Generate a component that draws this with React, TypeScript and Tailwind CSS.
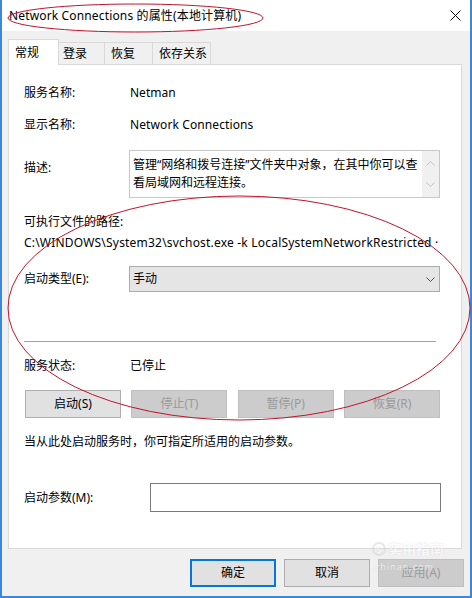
import type { ReactNode } from 'react';

const font = "font-['Noto_Sans','Noto_Sans_CJK_SC',sans-serif]";

function Tab({ label, active, width, pad }: { label: string; active?: boolean; width: number; pad: number }) {
  return (
    <div
      style={{ width, paddingLeft: pad }}
      className={
        active
          ? 'relative z-10 -mb-px flex h-[26px] items-center border border-b-0 border-[#d9d9d9] bg-white'
          : 'flex h-[22px] items-center border border-b-0 border-l-0 border-[#d9d9d9] bg-[#f0f0f0]'
      }
    >
      {label}
    </div>
  );
}

function Row({ label, children, className = '' }: { label: string; children?: ReactNode; className?: string }) {
  return (
    <div className={`flex h-[20px] items-center ${className}`}>
      <span className="w-[106px]">{label}</span>
      {children}
    </div>
  );
}

function Button({ label, disabled, primary, w = 'w-[96px]' }: { label: string; disabled?: boolean; primary?: boolean; w?: string }) {
  let cls = 'border-[#adadad] bg-[#e1e1e1] text-black';
  if (disabled) cls = 'border-[#bfbfbf] bg-[#cccccc] text-[#9a9a9a]';
  if (primary) cls = 'border-2 border-[#0078d7] bg-[#e1e1e1] text-black';
  return (
    <div className={`flex h-[28px] ${w} items-center justify-center border ${cls}`}>{label}</div>
  );
}

function Chevron({ up, color }: { up?: boolean; color: string }) {
  return (
    <svg width="9" height="5" viewBox="0 0 9 5" fill="none">
      <path d={up ? 'M0.5 4.5 L4.5 0.5 L8.5 4.5' : 'M0.5 0.5 L4.5 4.5 L8.5 0.5'} stroke={color} strokeWidth="1" />
    </svg>
  );
}

export default function App() {
  return (
    <div className={`relative flex h-[598px] w-[472px] flex-col border-x-2 border-b-2 border-[#3b87d8] bg-[#f0f0f0] text-[12px] leading-none text-black ${font}`}>
      {/* title bar */}
      <div className="flex h-[31px] items-center justify-between bg-white pl-[7px] pr-[9px]">
        <span className="tracking-[0.15px]">Network Connections 的属性(本地计算机)</span>
        <svg width="11" height="11" viewBox="0 0 11 11">
          <path d="M0.5 0.5 L10.5 10.5 M10.5 0.5 L0.5 10.5" stroke="#000" strokeWidth="1" />
        </svg>
      </div>

      {/* tabs */}
      <div className="ml-[6px] mt-[8px] flex h-[25px] items-end">
        <Tab label="常规" active width={51} pad={6} />
        <Tab label="登录" width={46} pad={4} />
        <Tab label="恢复" width={48} pad={6} />
        <Tab label="依存关系" width={58} pad={6} />
      </div>

      {/* tab page */}
      <div className="ml-[6px] flex h-[485px] w-[454px] flex-col border border-[#d9d9d9] bg-white pl-[15px] pt-[18px]">
        <Row label="服务名称:">Netman</Row>
        <Row label="显示名称:" className="mt-[12px]">
          <span className="tracking-[0.1px]">Network Connections</span>
        </Row>

        <div className="mt-[15px] flex">
          <span className="w-[105px] pt-[12px]">描述:</span>
          <div className="flex h-[48px] w-[311px] border border-[#c8c8c8]">
            <div className="flex-1 pl-[3px] pt-[5px] leading-[18px]">
              管理“网络和拨号连接”文件夹中对象，在其中你可以查看局域网和远程连接。
            </div>
            <div className="flex w-[17px] flex-col items-center justify-between bg-[#f0f0f0] py-[10px]">
              <Chevron up color="#c2c2c2" />
              <Chevron color="#c2c2c2" />
            </div>
          </div>
        </div>

        <div className="mt-[14px] flex h-[20px] items-center">可执行文件的路径:</div>
        <div className="mt-[1px] flex h-[20px] items-center whitespace-nowrap tracking-[0.2px]">
          C:\WINDOWS\System32\svchost.exe -k LocalSystemNetworkRestricted ·
        </div>

        <div className="mt-[13px] flex items-center">
          <span className="w-[105px]">启动类型(E):</span>
          <div className="flex h-[26px] w-[311px] items-center justify-between border border-[#acacac] bg-[#e5e5e5] pl-[3px] pr-[4px]">
            <span>手动</span>
            <Chevron color="#505050" />
          </div>
        </div>

        <div className="mt-[49px] h-px w-[412px] bg-[#a0a0a0]" />

        <Row label="服务状态:" className="mt-[14px]">
          已停止
        </Row>

        <div className="mt-[14px] flex w-[416px] justify-between pl-px">
          <Button label="启动(S)" />
          <Button label="停止(T)" disabled />
          <Button label="暂停(P)" disabled />
          <Button label="恢复(R)" disabled />
        </div>

        <div className="mt-[14px] flex h-[20px] items-center">当从此处启动服务时，你可指定所适用的启动参数。</div>

        <div className="mt-[31px] flex items-center">
          <span className="w-[126px]">启动参数(M):</span>
          <div className="h-[29px] w-[291px] border border-[#7a7a7a] bg-white" />
        </div>
      </div>

      {/* dialog buttons */}
      <div className="mt-[10px] flex justify-end gap-[8px] pr-[6px]">
        <Button label="确定" primary w="w-[86px]" />
        <Button label="取消" w="w-[86px]" />
        <Button label="应用(A)" disabled w="w-[86px]" />
      </div>

      {/* faint watermark */}
      <div className="pointer-events-none absolute left-[370px] top-[542px] flex flex-col gap-[6px] opacity-60">
        <div className="flex items-center gap-[2px] text-[14px] font-bold text-white [text-shadow:0_0_1px_#b8b8b8]">
          <span className="flex h-[14px] w-[14px] items-center justify-center rounded-full border-2 border-[#d8d8d8] text-[9px]">S</span>
          <span>实用指南</span>
        </div>
        <span className="pl-[3px] text-[9px] tracking-[1px] text-white [text-shadow:0_0_1px_#b8b8b8]">zhinan.com</span>
      </div>

      {/* red annotation marks drawn over the screenshot */}
      <svg className="pointer-events-none absolute left-[-2px] top-0" width="472" height="598" viewBox="0 0 472 598" fill="none">
        <ellipse cx="135.5" cy="18" rx="127.5" ry="14" stroke="#c0142c" strokeWidth="1" />
        <ellipse cx="239" cy="308" rx="231" ry="112" stroke="#c0142c" strokeWidth="1" />
      </svg>
    </div>
  );
}
